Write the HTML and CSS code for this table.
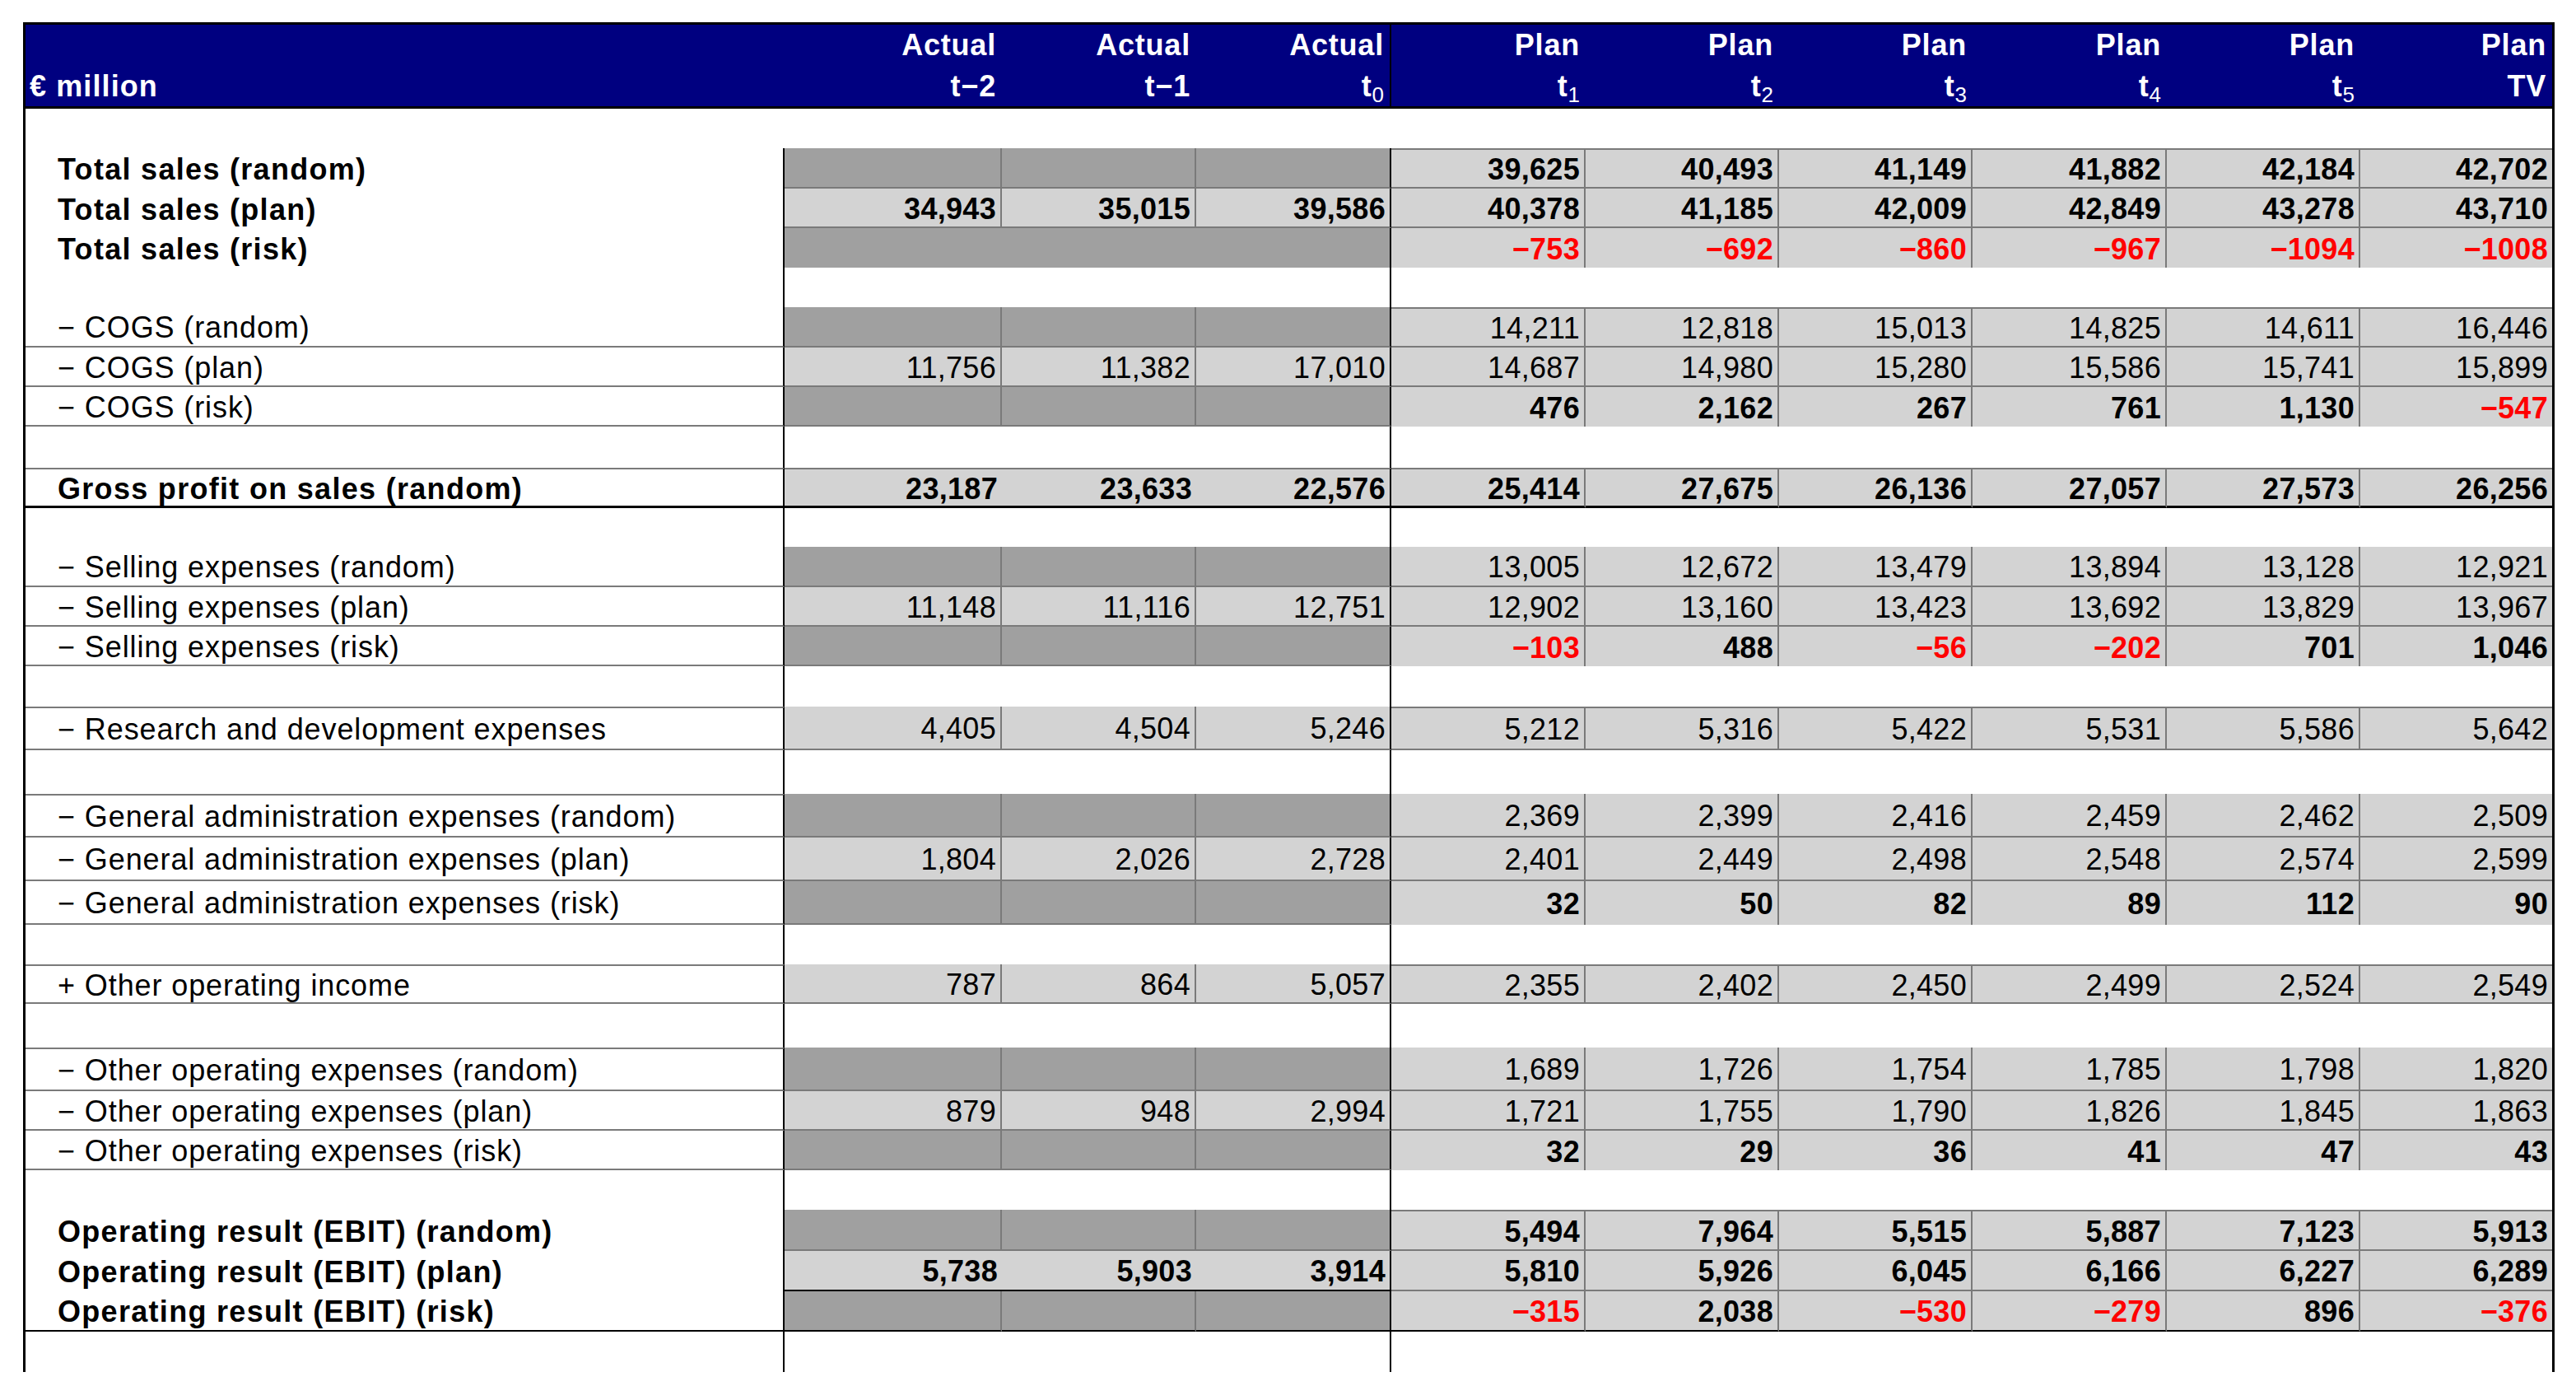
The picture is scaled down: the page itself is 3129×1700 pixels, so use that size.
FILE: index.html
```html
<!DOCTYPE html>
<html lang="en">
<head>
<meta charset="utf-8">
<title>€ million – plan vs. actual</title>
<link rel="stylesheet" href="styles.css">
</head>
<body>
<div class="page">
  <div class="hdr">
    <div class="h hl"><div class="ln">&nbsp;</div><div class="ln">€ million</div></div>
    <div class="h"><div class="ln">Actual</div><div class="ln">t−2</div></div>
    <div class="h"><div class="ln">Actual</div><div class="ln">t−1</div></div>
    <div class="h h3"><div class="ln">Actual</div><div class="ln">t<sub>0</sub></div></div>
    <div class="h"><div class="ln">Plan</div><div class="ln">t<sub>1</sub></div></div>
    <div class="h"><div class="ln">Plan</div><div class="ln">t<sub>2</sub></div></div>
    <div class="h"><div class="ln">Plan</div><div class="ln">t<sub>3</sub></div></div>
    <div class="h"><div class="ln">Plan</div><div class="ln">t<sub>4</sub></div></div>
    <div class="h"><div class="ln">Plan</div><div class="ln">t<sub>5</sub></div></div>
    <div class="h"><div class="ln">Plan</div><div class="ln">TV</div></div>
  </div>

  <div class="body">
    <div class="row first h48"><div class="c l"></div><div class="c a a1"></div><div class="c a a2"></div><div class="c a a3"></div><div class="c p"></div><div class="c p"></div><div class="c p"></div><div class="c p"></div><div class="c p"></div><div class="c p p6"></div></div>

    <div class="row data dka bold h49 tP bA bP"><div class="c l">Total sales (random)</div><div class="c a a1"></div><div class="c a a2"></div><div class="c a a3"></div><div class="c p">39,625</div><div class="c p">40,493</div><div class="c p">41,149</div><div class="c p">41,882</div><div class="c p">42,184</div><div class="c p p6">42,702</div></div>
    <div class="row data bold h48 bA bP"><div class="c l">Total sales (plan)</div><div class="c a a1">34,943</div><div class="c a a2">35,015</div><div class="c a a3">39,586</div><div class="c p">40,378</div><div class="c p">41,185</div><div class="c p">42,009</div><div class="c p">42,849</div><div class="c p">43,278</div><div class="c p p6">43,710</div></div>
    <div class="row data dka nda bold h48"><div class="c l">Total sales (risk)</div><div class="c a a1"></div><div class="c a a2"></div><div class="c a a3"></div><div class="c p r">−753</div><div class="c p r">−692</div><div class="c p r">−860</div><div class="c p r">−967</div><div class="c p r">−1094</div><div class="c p p6 r">−1008</div></div>

    <div class="row h48"><div class="c l"></div><div class="c a a1"></div><div class="c a a2"></div><div class="c a a3"></div><div class="c p"></div><div class="c p"></div><div class="c p"></div><div class="c p"></div><div class="c p"></div><div class="c p p6"></div></div>

    <div class="row data dka h49 tP bL bA bP"><div class="c l">− COGS (random)</div><div class="c a a1"></div><div class="c a a2"></div><div class="c a a3"></div><div class="c p">14,211</div><div class="c p">12,818</div><div class="c p">15,013</div><div class="c p">14,825</div><div class="c p">14,611</div><div class="c p p6">16,446</div></div>
    <div class="row data h48 bL bA bP"><div class="c l">− COGS (plan)</div><div class="c a a1">11,756</div><div class="c a a2">11,382</div><div class="c a a3">17,010</div><div class="c p">14,687</div><div class="c p">14,980</div><div class="c p">15,280</div><div class="c p">15,586</div><div class="c p">15,741</div><div class="c p p6">15,899</div></div>
    <div class="row data dka bnum h48 bL bA"><div class="c l">− COGS (risk)</div><div class="c a a1"></div><div class="c a a2"></div><div class="c a a3"></div><div class="c p">476</div><div class="c p">2,162</div><div class="c p">267</div><div class="c p">761</div><div class="c p">1,130</div><div class="c p p6 r">−547</div></div>

    <div class="row h50"><div class="c l"></div><div class="c a a1"></div><div class="c a a2"></div><div class="c a a3"></div><div class="c p"></div><div class="c p"></div><div class="c p"></div><div class="c p"></div><div class="c p"></div><div class="c p p6"></div></div>

    <div class="row data nda bold h49 tL tA tP thick"><div class="c l">Gross profit on sales (random)</div><div class="c a a1">23,187</div><div class="c a a2">23,633</div><div class="c a a3">22,576</div><div class="c p">25,414</div><div class="c p">27,675</div><div class="c p">26,136</div><div class="c p">27,057</div><div class="c p">27,573</div><div class="c p p6">26,256</div></div>

    <div class="row h47"><div class="c l"></div><div class="c a a1"></div><div class="c a a2"></div><div class="c a a3"></div><div class="c p"></div><div class="c p"></div><div class="c p"></div><div class="c p"></div><div class="c p"></div><div class="c p p6"></div></div>

    <div class="row data dka h49 bL bA bP"><div class="c l">− Selling expenses (random)</div><div class="c a a1"></div><div class="c a a2"></div><div class="c a a3"></div><div class="c p">13,005</div><div class="c p">12,672</div><div class="c p">13,479</div><div class="c p">13,894</div><div class="c p">13,128</div><div class="c p p6">12,921</div></div>
    <div class="row data h48 bL bA bP"><div class="c l">− Selling expenses (plan)</div><div class="c a a1">11,148</div><div class="c a a2">11,116</div><div class="c a a3">12,751</div><div class="c p">12,902</div><div class="c p">13,160</div><div class="c p">13,423</div><div class="c p">13,692</div><div class="c p">13,829</div><div class="c p p6">13,967</div></div>
    <div class="row data dka bnum h48 bL bA"><div class="c l">− Selling expenses (risk)</div><div class="c a a1"></div><div class="c a a2"></div><div class="c a a3"></div><div class="c p r">−103</div><div class="c p">488</div><div class="c p r">−56</div><div class="c p r">−202</div><div class="c p">701</div><div class="c p p6">1,046</div></div>

    <div class="row h49"><div class="c l"></div><div class="c a a1"></div><div class="c a a2"></div><div class="c a a3"></div><div class="c p"></div><div class="c p"></div><div class="c p"></div><div class="c p"></div><div class="c p"></div><div class="c p p6"></div></div>

    <div class="row data h53 tL tP bL bA bP"><div class="c l">− Research and development expenses</div><div class="c a a1">4,405</div><div class="c a a2">4,504</div><div class="c a a3">5,246</div><div class="c p">5,212</div><div class="c p">5,316</div><div class="c p">5,422</div><div class="c p">5,531</div><div class="c p">5,586</div><div class="c p p6">5,642</div></div>

    <div class="row h53"><div class="c l"></div><div class="c a a1"></div><div class="c a a2"></div><div class="c a a3"></div><div class="c p"></div><div class="c p"></div><div class="c p"></div><div class="c p"></div><div class="c p"></div><div class="c p p6"></div></div>

    <div class="row data dka h53 tL bL bA bP"><div class="c l">− General administration expenses (random)</div><div class="c a a1"></div><div class="c a a2"></div><div class="c a a3"></div><div class="c p">2,369</div><div class="c p">2,399</div><div class="c p">2,416</div><div class="c p">2,459</div><div class="c p">2,462</div><div class="c p p6">2,509</div></div>
    <div class="row data h53 bL bA bP"><div class="c l">− General administration expenses (plan)</div><div class="c a a1">1,804</div><div class="c a a2">2,026</div><div class="c a a3">2,728</div><div class="c p">2,401</div><div class="c p">2,449</div><div class="c p">2,498</div><div class="c p">2,548</div><div class="c p">2,574</div><div class="c p p6">2,599</div></div>
    <div class="row data dka bnum h53 bL bA"><div class="c l">− General administration expenses (risk)</div><div class="c a a1"></div><div class="c a a2"></div><div class="c a a3"></div><div class="c p">32</div><div class="c p">50</div><div class="c p">82</div><div class="c p">89</div><div class="c p">112</div><div class="c p p6">90</div></div>

    <div class="row h48"><div class="c l"></div><div class="c a a1"></div><div class="c a a2"></div><div class="c a a3"></div><div class="c p"></div><div class="c p"></div><div class="c p"></div><div class="c p"></div><div class="c p"></div><div class="c p p6"></div></div>

    <div class="row data h48 tL tP bL bA bP"><div class="c l">+ Other operating income</div><div class="c a a1">787</div><div class="c a a2">864</div><div class="c a a3">5,057</div><div class="c p">2,355</div><div class="c p">2,402</div><div class="c p">2,450</div><div class="c p">2,499</div><div class="c p">2,524</div><div class="c p p6">2,549</div></div>

    <div class="row h53"><div class="c l"></div><div class="c a a1"></div><div class="c a a2"></div><div class="c a a3"></div><div class="c p"></div><div class="c p"></div><div class="c p"></div><div class="c p"></div><div class="c p"></div><div class="c p p6"></div></div>

    <div class="row data dka h53 tL bL bA bP"><div class="c l">− Other operating expenses (random)</div><div class="c a a1"></div><div class="c a a2"></div><div class="c a a3"></div><div class="c p">1,689</div><div class="c p">1,726</div><div class="c p">1,754</div><div class="c p">1,785</div><div class="c p">1,798</div><div class="c p p6">1,820</div></div>
    <div class="row data h48 bL bA bP"><div class="c l">− Other operating expenses (plan)</div><div class="c a a1">879</div><div class="c a a2">948</div><div class="c a a3">2,994</div><div class="c p">1,721</div><div class="c p">1,755</div><div class="c p">1,790</div><div class="c p">1,826</div><div class="c p">1,845</div><div class="c p p6">1,863</div></div>
    <div class="row data dka bnum h48 bL bA"><div class="c l">− Other operating expenses (risk)</div><div class="c a a1"></div><div class="c a a2"></div><div class="c a a3"></div><div class="c p">32</div><div class="c p">29</div><div class="c p">36</div><div class="c p">41</div><div class="c p">47</div><div class="c p p6">43</div></div>

    <div class="row h48"><div class="c l"></div><div class="c a a1"></div><div class="c a a2"></div><div class="c a a3"></div><div class="c p"></div><div class="c p"></div><div class="c p"></div><div class="c p"></div><div class="c p"></div><div class="c p p6"></div></div>

    <div class="row data dka bold h50 tP bA bP"><div class="c l">Operating result (EBIT) (random)</div><div class="c a a1"></div><div class="c a a2"></div><div class="c a a3"></div><div class="c p">5,494</div><div class="c p">7,964</div><div class="c p">5,515</div><div class="c p">5,887</div><div class="c p">7,123</div><div class="c p p6">5,913</div></div>
    <div class="row data nda bold h49 bAk bP"><div class="c l">Operating result (EBIT) (plan)</div><div class="c a a1">5,738</div><div class="c a a2">5,903</div><div class="c a a3">3,914</div><div class="c p">5,810</div><div class="c p">5,926</div><div class="c p">6,045</div><div class="c p">6,166</div><div class="c p">6,227</div><div class="c p p6">6,289</div></div>
    <div class="row data dka bold h49 bk"><div class="c l">Operating result (EBIT) (risk)</div><div class="c a a1"></div><div class="c a a2"></div><div class="c a a3"></div><div class="c p r">−315</div><div class="c p">2,038</div><div class="c p r">−530</div><div class="c p r">−279</div><div class="c p">896</div><div class="c p p6 r">−376</div></div>

    <div class="row h49"><div class="c l"></div><div class="c a a1"></div><div class="c a a2"></div><div class="c a a3"></div><div class="c p"></div><div class="c p"></div><div class="c p"></div><div class="c p"></div><div class="c p"></div><div class="c p p6"></div></div>
  </div>
</div>
</body>
</html>
```

FILE: styles.css
```css
:root {
  --cols: 922px 264px 236px 237px 236px 235px 235px 236px 235px 233px;
  --hair: #7a7a7a;
  --dark: #a0a0a0;
  --light: #d3d3d3;
  --navy: #000080;
}

html, body {
  margin: 0;
  padding: 0;
  background: #ffffff;
}

body {
  font-family: "Liberation Sans", Arial, sans-serif;
  color: #000000;
}

.page {
  padding: 27px 0 0 28px;
  width: 3075px;
}

/* ---------- header ---------- */
.hdr {
  display: grid;
  grid-template-columns: var(--cols);
  border: 3px solid #000;
  background: var(--navy);
  color: #ffffff;
  height: 105px;
  box-sizing: border-box;
}

.h {
  box-sizing: border-box;
  height: 99px;
  padding-right: 7px;
  text-align: right;
  font-size: 36px;
  font-weight: 700;
  line-height: 49.5px;
  letter-spacing: 0.8px;
  white-space: nowrap;
}

.h.hl {
  text-align: left;
  padding-left: 5px;
  padding-right: 0;
  letter-spacing: 1.1px;
}

.h.h3 {
  border-right: 2px solid #000;
}

.h sub {
  font-size: 26px;
  font-weight: 400;
  line-height: 0;
  vertical-align: -7px;
  letter-spacing: 0;
}

/* ---------- body ---------- */
.body {
  border-left: 3px solid #000;
  border-right: 3px solid #000;
}

.row {
  display: grid;
  grid-template-columns: var(--cols);
}

.h47 { height: 47px; }
.h48 { height: 48px; }
.h49 { height: 49px; }
.h50 { height: 50px; }
.h53 { height: 53px; }

.c {
  box-sizing: border-box;
  display: flex;
  align-items: center;
  justify-content: flex-end;
  padding: 3px 5px 0 0;
  font-size: 36px;
  font-weight: 400;
  letter-spacing: 0.3px;
  white-space: nowrap;
  overflow: hidden;
}

.c.l {
  justify-content: flex-start;
  padding-left: 39px;
  letter-spacing: 0.9px;
  border-right: 2px solid #000;
}

.bold > .c.l {
  letter-spacing: 1.3px;
}

.c.a3 {
  border-right: 2px solid #000;
}

.first > .c.l,
.first > .c.a3 {
  border-right: none;
}

/* cell fills */
.data > .a,
.data > .p {
  background: var(--light);
}

.data.dka > .a {
  background: var(--dark);
}

/* hairline dividers between value cells */
.data > .a1,
.data > .a2,
.data > .p:not(.p6) {
  border-right: 2px solid var(--hair);
}

.data.nda > .a1,
.data.nda > .a2 {
  border-right: none;
}

/* horizontal hairlines */
.tL > .l { border-top: 2px solid var(--hair); }
.tA > .a { border-top: 2px solid var(--hair); }
.tP > .p { border-top: 2px solid var(--hair); }
.bL > .l { border-bottom: 2px solid var(--hair); }
.bA > .a { border-bottom: 2px solid var(--hair); }
.bP > .p { border-bottom: 2px solid var(--hair); }

/* solid rules */
.thick > .c { border-bottom: 3px solid #000; }
.bAk > .a { border-bottom: 2px solid #000; }
.bk > .c { border-bottom: 2px solid #000; }

/* text weights and colours */
.bold > .c { font-weight: 700; }
.bnum > .a,
.bnum > .p { font-weight: 700; }
.c.r { color: #ff0000; }
```
